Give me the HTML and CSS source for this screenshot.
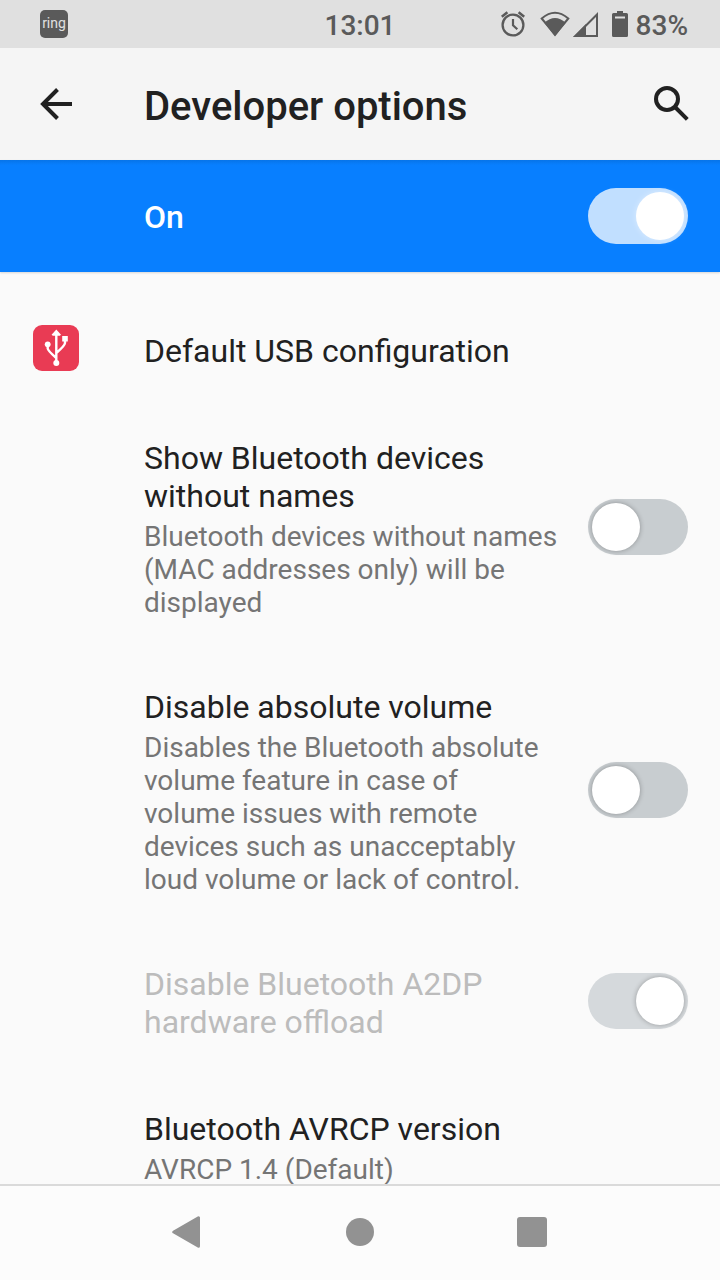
FILE: index.html
```html
<!DOCTYPE html>
<html lang="en">
<head>
<meta charset="utf-8">
<meta name="viewport" content="width=device-width, initial-scale=1">
<title>Developer options</title>
<link rel="stylesheet" href="styles.css">
</head>
<body>
<div class="screen">
  <div class="status-bar">
    <div><span class="ring-badge">ring</span></div>
    <time class="clock">13:01</time>
    <div class="status-icons">
      <svg width="128" height="28" viewBox="0 0 128 28" aria-hidden="true">
        <g fill="none" stroke="#5a5a5a">
          <circle cx="12" cy="15" r="10.4" stroke-width="2.3"/>
          <path d="M12 9v6.300l4.300 4" stroke-width="2.2"/>
          <path d="M.8 6.800 6.400 2.200M23.200 6.800 17.600 2.200" stroke-width="2.5"/>
          <path d="M96 4.500V26H74.500Z" stroke-width="2"/>
          <path d="M40.700 8.500Q54-3 67.300 8.500L54 24.500Z" stroke-width="2"/>
        </g>
        <g fill="#5a5a5a">
          <path d="M54 26.500 43.300 12.800Q54 3.200 64.700 12.800Z"/>
          <path d="M72 27 85 14v13Z"/>
          <path d="M116 3V1h6v2h3.500Q127 3 127 4.500v21Q127 27 125.500 27h-13Q111 27 111 25.500v-21Q111 3 112.500 3Z"/>
        </g>
        <path d="M114 6.500h10v2h-10Z" fill="#e0e0e0"/>
      </svg>
      <span>83%</span>
    </div>
  </div>
  <header class="app-bar">
    <button class="icon-button" type="button" aria-label="Navigate up">
      <svg width="32" height="32" viewBox="0 0 32 32" fill="none" stroke="#212121" stroke-width="4" aria-hidden="true"><path d="M32 16H3M17.500 1.500 3 16l14.500 14.500"/></svg>
    </button>
    <h1 class="page-title">Developer options</h1>
    <button class="icon-button" type="button" aria-label="Search">
      <svg width="36" height="36" viewBox="0 0 36 36" fill="none" stroke="#212121" stroke-width="4" aria-hidden="true"><circle cx="13" cy="13" r="11"/><path d="m20.500 20.500 12.800 12.800"/></svg>
    </button>
  </header>
  <label class="master">
    <span class="master-label">On</span>
    <input class="switch" type="checkbox" role="switch" checked>
  </label>
  <main class="settings">
    <div class="row">
      <span class="row-icon">
        <svg width="46" height="46" viewBox="0 0 46 46" aria-hidden="true">
          <rect width="46" height="46" rx="9" fill="#e93b54"/>
          <path d="M23.300 38V8M23.300 34.500V33Q14.700 25.500 14.700 23.500V20M23.300 28Q32 20.500 32 18V14" fill="none" stroke="#fff" stroke-width="2.400"/>
          <g fill="#fff"><path d="m23.300 4.500 4.700 5.300-1.200 1h-7l-1.200-1Z"/><circle cx="14.700" cy="19.300" r="2.900"/><circle cx="23.300" cy="38" r="3"/><path d="M29.200 11h5.600v5.500h-5.600Z"/></g>
        </svg>
      </span>
      <div class="row-text"><div class="row-title">Default USB configuration</div></div>
    </div>
    <label class="row">
      <span class="row-text">
        <span class="row-title">Show Bluetooth devices without names</span>
        <span class="row-summary">Bluetooth devices without names (MAC addresses only) will be displayed</span>
      </span>
      <input class="switch" type="checkbox" role="switch">
    </label>
    <label class="row">
      <span class="row-text">
        <span class="row-title">Disable absolute volume</span>
        <span class="row-summary">Disables the Bluetooth absolute volume feature in case of<br>volume issues with remote devices such as unacceptably loud volume or lack of control.</span>
      </span>
      <input class="switch" type="checkbox" role="switch">
    </label>
    <label class="row row-disabled">
      <span class="row-text"><span class="row-title">Disable Bluetooth A2DP hardware offload</span></span>
      <input class="switch" type="checkbox" role="switch" checked disabled>
    </label>
    <div class="row">
      <div class="row-text">
        <div class="row-title">Bluetooth AVRCP version</div>
        <div class="row-summary">AVRCP 1.4 (Default)</div>
      </div>
    </div>
  </main>
  <nav class="nav-bar" aria-label="System">
    <button type="button" aria-label="Back">
      <svg width="32" height="32" viewBox="0 0 32 32" aria-hidden="true"><path d="M26.500 1.800v28.400L1.800 16Z" fill="#929292" stroke="#929292" stroke-width="3" stroke-linejoin="round"/></svg>
    </button>
    <button type="button" aria-label="Home">
      <svg width="32" height="32" viewBox="0 0 32 32" aria-hidden="true"><circle cx="16" cy="16" r="14" fill="#929292"/></svg>
    </button>
    <button type="button" aria-label="Recent apps">
      <svg width="32" height="32" viewBox="0 0 32 32" aria-hidden="true"><rect x="1" y="1" width="30" height="30" rx="3" fill="#929292"/></svg>
    </button>
  </nav>
</div>
</body>
</html>
```
FILE: styles.css
```css
* { box-sizing: border-box; }

body {
  margin: 0;
  font-family: Roboto, "Noto Sans", sans-serif;
  color: #212121;
  background: #fafafa;
}

button {
  padding: 0;
  border: 0;
  background: none;
}

svg { display: block; }

.screen {
  display: flex;
  flex-direction: column;
  height: 100vh;
}

.status-bar {
  display: grid;
  grid-template-columns: 1fr auto 1fr;
  align-items: center;
  height: 48px;
  padding: 0 32px;
  background: #e0e0e0;
  color: #5a5a5a;
  font-size: 28px;
  font-weight: 500;
  line-height: 44px;
}

.status-icons {
  display: flex;
  justify-content: flex-end;
  align-items: center;
  gap: 7px;
}

.clock,
.status-icons span { padding-top: 4px; }

.ring-badge {
  display: block;
  width: 28px;
  height: 28px;
  margin-left: 8px;
  border-radius: 5px;
  background: #5a5a5a;
  color: #e0e0e0;
  font-size: 14px;
  font-weight: 400;
  line-height: 26px;
  text-align: center;
}

.app-bar {
  display: flex;
  align-items: center;
  height: 112px;
  padding: 0 30px 0 40px;
  background: #f5f5f5;
}

.page-title {
  flex: 1;
  margin: 0 0 0 72px;
  padding-top: 6px;
  font-size: 40px;
  font-weight: 500;
  line-height: 48px;
}

.master {
  display: flex;
  align-items: center;
  height: 112px;
  padding: 0 32px 0 144px;
  background: linear-gradient(#0774e8, #087fff 5px);
  color: #fff;
  box-shadow: 0 1px 2px rgba(0, 0, 0, 0.15);
}

.master-label {
  flex: 1;
  padding-top: 2px;
  font-size: 32px;
  font-weight: 500;
  line-height: 38px;
}

.switch {
  appearance: none;
  display: flex;
  flex: none;
  width: 100px;
  height: 56px;
  margin: 0;
  padding: 4px;
  border-radius: 28px;
  background: #c8cdd0;
}

.switch::before {
  content: "";
  width: 48px;
  height: 48px;
  border-radius: 50%;
  background: #fff;
  box-shadow: 0 0 5px rgba(0, 0, 0, 0.3);
}

.switch:checked { justify-content: flex-end; }

.switch:disabled { background: #d5d9dc; }

.master .switch { background: #c1dfff; }

.master .switch::before { box-shadow: 0 0 6px rgba(255, 255, 255, 0.4); }

.settings {
  flex: 1;
  min-height: 0;
  padding-top: 23px;
  overflow: hidden;
}

.row {
  position: relative;
  display: flex;
  align-items: center;
  gap: 24px;
  padding: 32px 32px 32px 144px;
}

.row-icon {
  position: absolute;
  left: 33px;
  padding-bottom: 2px;
}

.row-text {
  display: flex;
  flex: 1;
  flex-direction: column;
  gap: 5px;
  padding-top: 5px;
}

.row-title {
  font-size: 32px;
  line-height: 38px;
}

.row-summary {
  color: #757575;
  font-size: 28px;
  line-height: 33px;
}

.row-disabled { color: #bcbcbc; }

.nav-bar {
  display: flex;
  justify-content: center;
  align-items: center;
  gap: 140px;
  height: 96px;
  padding-bottom: 2px;
  border-top: 2px solid #dadada;
  background: #fcfcfc;
}
```
